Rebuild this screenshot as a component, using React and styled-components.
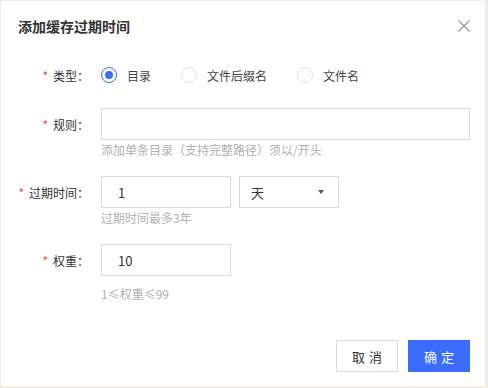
import React, { useState } from 'react';
import styled, { createGlobalStyle } from 'styled-components';

const GlobalStyle = createGlobalStyle`
    html, body {
        margin: 0;
        padding: 0;
        background: #efeee5;
    }
    body {
        font-family: "Noto Sans CJK SC", "Noto Sans", sans-serif;
        color: #333;
    }
`;

const Dialog = styled.div`
    display: flex;
    flex-direction: column;
    box-sizing: border-box;
    width: 484px;
    height: 385px;
    margin: 1px 0 0 1px;
    background: #fff;
`;

const Header = styled.div`
    display: flex;
    justify-content: space-between;
    align-items: center;
    height: 50px;
    padding: 0 15px 0 17px;
`;

const Title = styled.h3`
    margin: 0;
    font-size: 14px;
    font-weight: 700;
    line-height: 20px;
    color: #333;
`;

const CloseButton = styled.button`
    display: flex;
    align-items: center;
    justify-content: center;
    width: 12px;
    height: 12px;
    padding: 0;
    border: none;
    background: none;
    cursor: pointer;
`;

const Body = styled.div`
    padding: 8px 15px 0 0;
`;

const FormRow = styled.div`
    display: flex;
    align-items: flex-start;
    margin-bottom: ${(p) => p.$spacing || 16}px;
`;

const Label = styled.label`
    flex: none;
    box-sizing: border-box;
    width: 100px;
    height: 32px;
    padding-right: 12px;
    display: flex;
    align-items: center;
    justify-content: flex-end;
    font-size: 12px;
    color: #333;
    white-space: nowrap;
`;

const Required = styled.span`
    color: #f04848;
    margin-right: 5px;
    font-size: 12px;
`;

const Control = styled.div`
    flex: 1;
    display: flex;
    flex-direction: column;
`;

const Inline = styled.div`
    display: flex;
    gap: 8px;
`;

const RadioGroup = styled.div`
    display: flex;
    align-items: center;
    height: 32px;
    gap: 30px;
`;

const RadioItem = styled.label`
    display: flex;
    align-items: center;
    gap: 10px;
    font-size: 12px;
    color: #444;
    cursor: pointer;
`;

const RadioCircle = styled.span`
    box-sizing: border-box;
    width: 16px;
    height: 16px;
    border-radius: 50%;
    border: 1px solid ${(p) => (p.$checked ? '#3b6cff' : '#e2e2e2')};
    display: flex;
    align-items: center;
    justify-content: center;

    &::after {
        content: '';
        width: 8px;
        height: 8px;
        border-radius: 50%;
        background: ${(p) => (p.$checked ? '#3b6cff' : 'transparent')};
    }
`;

const TextInput = styled.input`
    box-sizing: border-box;
    width: ${(p) => (p.$width ? `${p.$width}px` : '100%')};
    height: 32px;
    padding: 0 16px;
    border: 1px solid #dcdcdc;
    border-radius: 0;
    outline: none;
    font-family: inherit;
    font-size: 13px;
    color: #333;
    background: #fff;
`;

const SelectBox = styled.div`
    box-sizing: border-box;
    width: 100px;
    height: 32px;
    padding: 0 14px 0 11px;
    border: 1px solid #dcdcdc;
    display: flex;
    align-items: center;
    justify-content: space-between;
    font-size: 13px;
    color: #333;
    cursor: pointer;
`;

const Caret = styled.span`
    width: 0;
    height: 0;
    border-left: 3.5px solid transparent;
    border-right: 3.5px solid transparent;
    border-top: 4px solid #555;
`;

const Hint = styled.div`
    margin-top: ${(p) => p.$offset || 0}px;
    font-size: 12px;
    line-height: 20px;
    color: #b0b0b0;
    white-space: nowrap;
`;

const Footer = styled.div`
    margin-top: auto;
    display: flex;
    justify-content: flex-end;
    gap: 10px;
    padding: 0 15px 14px 0;
`;

const Button = styled.button`
    box-sizing: border-box;
    width: 62px;
    height: 32px;
    padding: 0 0 0 4px;
    font-family: inherit;
    font-size: 13px;
    letter-spacing: 4px;
    border: 1px solid ${(p) => (p.$primary ? '#3b6cff' : '#dcdcdc')};
    background: ${(p) => (p.$primary ? '#3b6cff' : '#fff')};
    color: ${(p) => (p.$primary ? '#fff' : '#333')};
    cursor: pointer;
`;

const CloseIcon = () => (
    <svg width="12" height="12" viewBox="0 0 12 12">
        <path d="M0.5 0.5 L11.5 11.5 M11.5 0.5 L0.5 11.5" stroke="#9a9a9a" strokeWidth="1.2" fill="none" />
    </svg>
);

const types = ['目录', '文件后缀名', '文件名'];

const App = () => {
    const [type, setType] = useState('目录');

    return (
        <>
            <GlobalStyle />
            <Dialog>
                <Header>
                    <Title>添加缓存过期时间</Title>
                    <CloseButton aria-label="close">
                        <CloseIcon />
                    </CloseButton>
                </Header>
                <Body>
                    <FormRow $spacing={17}>
                        <Label><Required>*</Required>类型：</Label>
                        <RadioGroup>
                            {types.map((t) => (
                                <RadioItem key={t} onClick={() => setType(t)}>
                                    <RadioCircle $checked={type === t} />
                                    {t}
                                </RadioItem>
                            ))}
                        </RadioGroup>
                    </FormRow>
                    <FormRow>
                        <Label><Required>*</Required>规则：</Label>
                        <Control>
                            <TextInput defaultValue="" />
                            <Hint>添加单条目录（支持完整路径）须以/开头</Hint>
                        </Control>
                    </FormRow>
                    <FormRow>
                        <Label><Required>*</Required>过期时间：</Label>
                        <Control>
                            <Inline>
                                <TextInput $width={130} defaultValue="1" />
                                <SelectBox>
                                    天
                                    <Caret />
                                </SelectBox>
                            </Inline>
                            <Hint>过期时间最多3年</Hint>
                        </Control>
                    </FormRow>
                    <FormRow>
                        <Label><Required>*</Required>权重：</Label>
                        <Control>
                            <TextInput $width={130} defaultValue="10" />
                            <Hint $offset={8}>1≤权重≤99</Hint>
                        </Control>
                    </FormRow>
                </Body>
                <Footer>
                    <Button>取消</Button>
                    <Button $primary>确定</Button>
                </Footer>
            </Dialog>
        </>
    );
};

export default App;
